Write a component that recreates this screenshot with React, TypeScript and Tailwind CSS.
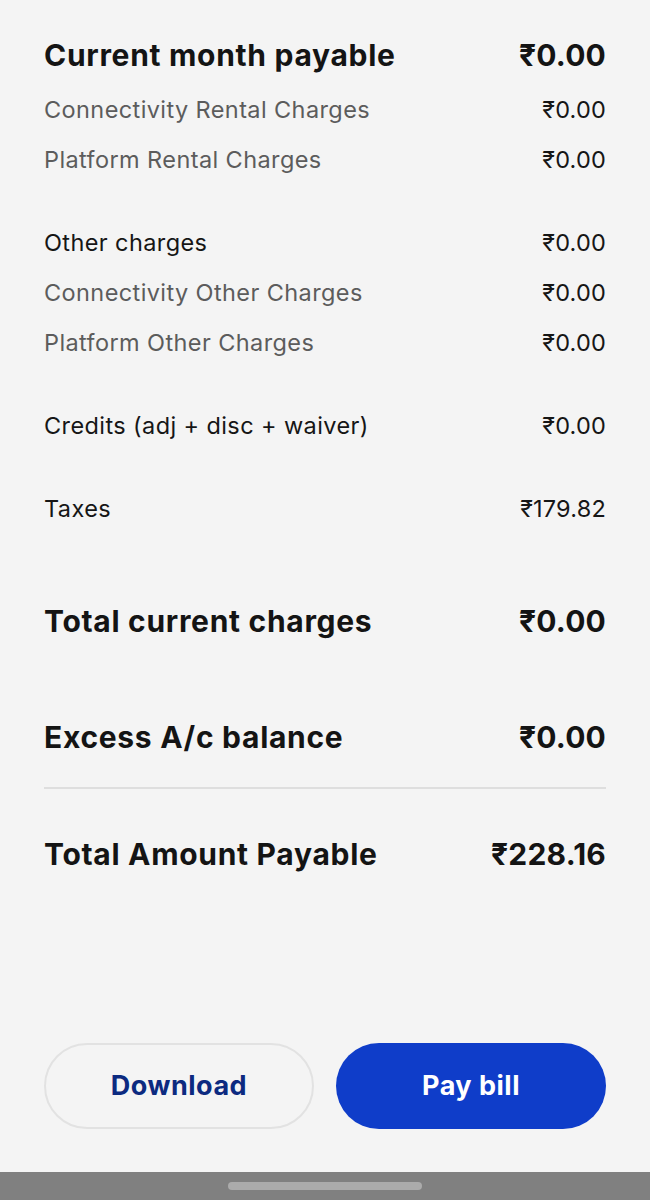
import React from "react";

const font = { fontFamily: "Inter, 'Noto Sans', sans-serif" };

function Row({ label, value, kind }: { label: string; value: string; kind: "head" | "sub" | "main" }) {
  const cls =
    kind === "head"
      ? "text-[30px] font-bold text-[#141414] tracking-[0.7px]"
      : kind === "sub"
      ? "text-[23.5px] text-[#5c5c5c] tracking-[0.4px]"
      : "text-[23.5px] text-[#161616] tracking-[0.4px]";
  const vcls = kind === "head" ? "tracking-[0.2px]" : "tracking-[0.2px] text-[#161616]";
  return (
    <div className={`flex h-[50px] items-center justify-between ${cls}`}>
      <span>{label}</span>
      <span className={vcls}>{value}</span>
    </div>
  );
}

export default function App() {
  return (
    <div className="w-[650px] h-[1200px] bg-[#f4f4f4] flex flex-col" style={font}>
      <div className="px-[44px] pt-[30px] flex flex-col">
        <Row kind="head" label="Current month payable" value="₹0.00" />
        <div className="mt-[5px]">
          <Row kind="sub" label="Connectivity Rental Charges" value="₹0.00" />
          <Row kind="sub" label="Platform Rental Charges" value="₹0.00" />
        </div>
        <div className="mt-[33px]">
          <Row kind="main" label="Other charges" value="₹0.00" />
          <Row kind="sub" label="Connectivity Other Charges" value="₹0.00" />
          <Row kind="sub" label="Platform Other Charges" value="₹0.00" />
        </div>
        <div className="mt-[33px]">
          <Row kind="main" label="Credits (adj + disc + waiver)" value="₹0.00" />
        </div>
        <div className="mt-[33px]">
          <Row kind="main" label="Taxes" value="₹179.82" />
        </div>
        <div className="mt-[62px]">
          <Row kind="head" label="Total current charges" value="₹0.00" />
        </div>
        <div className="mt-[66px]">
          <Row kind="head" label="Excess A/c balance" value="₹0.00" />
        </div>
        <div className="mt-[25px] h-[2px] bg-[#dedede]" />
        <div className="mt-[40px]">
          <Row kind="head" label="Total Amount Payable" value="₹228.16" />
        </div>
      </div>
      <div className="mt-auto px-[44px] flex justify-between pb-[43px]">
        <button className="w-[270px] h-[86px] rounded-full border-2 border-[#e2e2e2] bg-[#f4f4f4] text-[27px] font-bold text-[#0c2a80] tracking-[0.5px]">
          Download
        </button>
        <button className="w-[270px] h-[86px] rounded-full bg-[#0f3dc9] text-[27px] font-bold text-white tracking-[0.5px]">
          Pay bill
        </button>
      </div>
      <div className="h-[28px] bg-[#808080] flex items-center justify-center">
        <div className="w-[194px] h-[8px] rounded-full bg-[#ababab]" />
      </div>
    </div>
  );
}
